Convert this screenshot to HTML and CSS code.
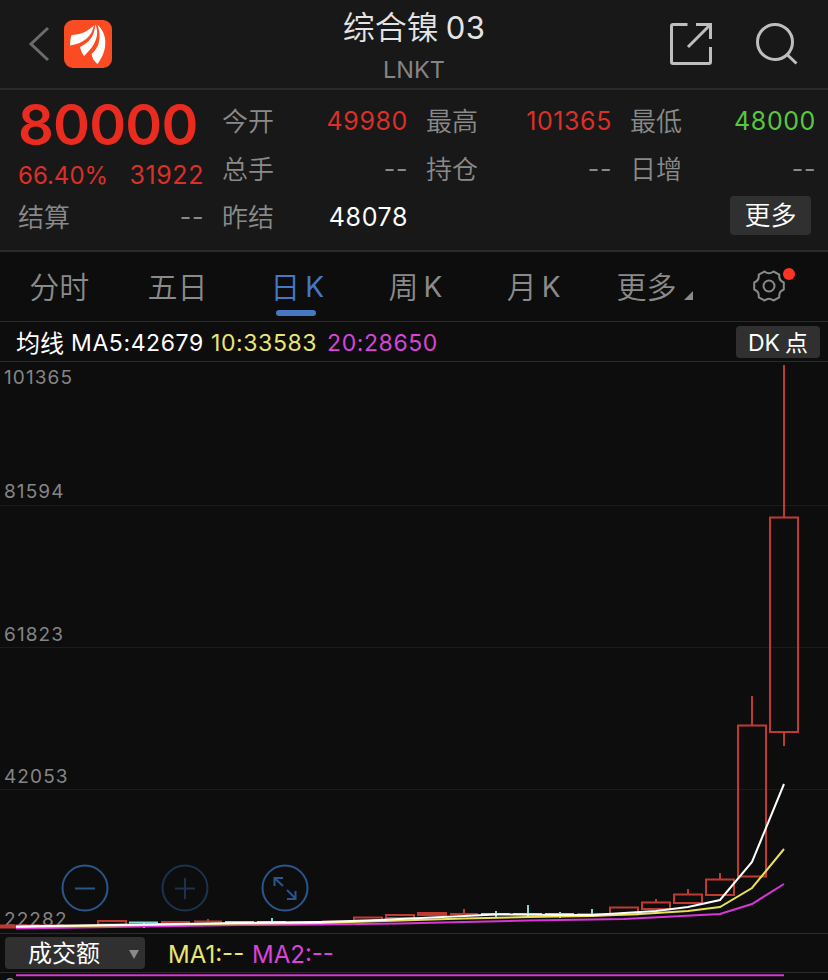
FILE: index.html
```html
<!DOCTYPE html>
<html lang="zh-CN">
<head>
    <meta charset="UTF-8">
    <meta name="viewport" content="width=device-width, initial-scale=1.0">
    <title>综合镍03</title>
    <link rel="stylesheet" href="styles.css">
</head>
<body>
    <header class="header">
        <div class="header-left">
            <svg class="back" width="22" height="38" viewBox="0 0 22 38"><path d="M20 3L3 19L20 35"/></svg>
            <svg class="logo" width="48" height="48" viewBox="0 0 48 48">
                <rect width="48" height="48" rx="9" fill="#fb4b22"/>
                <path d="M6 25.500C6.300 21 6.500 18 7.500 15C16 15 25 11 30 5C28 17 19 23.500 6 25.500Z"/>
                <path d="M16 27C25 23 31 15 31.200 4.500C37 16 29 28 20 36C18 33 16.500 30 16 27Z"/>
                <path d="M33.500 5C43 13 45 29 33.500 44C30 41 28 38 27.500 34C36 27 37.500 16 33.500 5Z"/>
            </svg>
        </div>
        <div class="title">
            <h1>综合镍<span class="title-num">03</span></h1>
            <p>LNKT</p>
        </div>
        <div class="header-right">
            <svg class="share" width="44" height="44" viewBox="0 0 44 44">
                <path d="M18.500 2.500H4Q2.500 2.500 2.500 4V40Q2.500 41.500 4 41.500H40Q41.500 41.500 41.500 40V25M27 2.500H41.500V17M41.500 2.500L19 25"/>
            </svg>
            <svg class="search" width="44" height="44" viewBox="0 0 44 44">
                <circle cx="20" cy="20" r="17.500"/><path d="M31.500 32L41.500 41.500"/>
            </svg>
        </div>
    </header>

    <section class="quote">
        <div class="col">
            <div class="price">80000</div>
            <div class="change"><span>66.40%</span><span class="amount">31922</span></div>
            <div class="row settle"><span class="label">结算</span><span class="num">--</span></div>
        </div>
        <div class="col">
            <div class="row"><span class="label">今开</span><span class="num red">49980</span></div>
            <div class="row"><span class="label">总手</span><span class="num">--</span></div>
            <div class="row"><span class="label">昨结</span><span class="num white">48078</span></div>
        </div>
        <div class="col">
            <div class="row"><span class="label">最高</span><span class="num red">101365</span></div>
            <div class="row"><span class="label">持仓</span><span class="num">--</span></div>
        </div>
        <div class="col">
            <div class="row"><span class="label">最低</span><span class="num green">48000</span></div>
            <div class="row"><span class="label">日增</span><span class="num">--</span></div>
            <div class="row row-more"><button class="more">更多</button></div>
        </div>
    </section>

    <nav class="tabs">
        <a class="tab">分时</a>
        <a class="tab">五日</a>
        <a class="tab active">日<span>K</span></a>
        <a class="tab">周<span>K</span></a>
        <a class="tab">月<span>K</span></a>
        <a class="tab tab-more">更多<svg class="corner" width="9" height="9" viewBox="0 0 9 9"><path d="M9 0V9H0Z"/></svg></a>
        <a class="tab tab-set">
            <svg class="gear" width="34" height="32" viewBox="0 0 34 32">
                <path d="M12.500 1.500Q17 5 21.500 1.500L27.300 4.700Q26.500 10.500 31.800 12.500V19.500Q26.500 21.500 27.300 27.300L21.500 30.500Q17 27 12.500 30.500L6.700 27.300Q7.500 21.500 2.200 19.500V12.500Q7.500 10.500 6.700 4.700Z"/>
                <circle cx="17" cy="16" r="5.500"/>
            </svg>
            <span class="dot"></span>
        </a>
    </nav>

    <div class="ma-bar">
        <span class="ma-name">均线</span>
        <span class="ma5">MA5:42679</span>
        <span class="ma10">10:33583</span>
        <span class="ma20">20:28650</span>
        <button class="dk">DK<span>点</span></button>
    </div>

    <main class="chart">
        <svg width="828" height="571" viewBox="0 362 828 571">
            <!-- grid -->
            <path class="grid" d="M0 505.500H828M0 647.500H828M0 789.500H828"/>

            <!-- zoom controls -->
            <g class="ctrl">
                <circle cx="85" cy="888" r="22.500"/>
                <path d="M75 888.500H95"/>
            </g>
            <g class="ctrl disabled">
                <circle cx="185" cy="888" r="22.500"/>
                <path d="M175 888.500H195M185 878V899"/>
            </g>
            <g class="ctrl">
                <circle cx="285" cy="888" r="22.500"/>
                <path d="M274.500 886V878H283M275 878.500L283 886M287 890L295 898M295.500 891V899H287"/>
            </g>

            <text class="axis" x="4" y="384">101365</text>
            <text class="axis" x="4" y="498">81594</text>
            <text class="axis" x="4" y="641">61823</text>
            <text class="axis" x="4" y="783">42053</text>
            <text class="axis" x="4" y="926">22282</text>

            <!-- candles, 32px apart -->
            <g class="up">
                <path d="M1 925.500H30V927.500H1ZM34 925.500H62M66 925.500H95"/>
                <rect x="98" y="921" width="28" height="3.500"/>
                <path d="M161 922H190M194 921.500H222M208 919V922M289 922.500H318M322 921.500H350"/>
                <rect x="354" y="917.500" width="28" height="3"/>
                <rect x="386" y="915" width="28" height="3"/>
                <rect x="418" y="913" width="28" height="2"/>
                <path d="M450 914H478M464 909V914"/>
                <rect x="610" y="907.500" width="28" height="7"/>
                <rect x="642" y="902.500" width="28" height="6.500"/>
                <path d="M656 899V902"/>
                <rect x="674" y="894.500" width="28" height="8.500"/>
                <path d="M688 889V894"/>
                <rect x="706" y="879.500" width="28" height="15.500"/>
                <path d="M720 873V879"/>
                <rect x="738" y="725.500" width="28" height="151"/>
                <path d="M752 696V725"/>
                <rect x="770" y="517.500" width="28" height="214.500"/>
                <path d="M784 365V517M784 732V746"/>
            </g>
            <g class="down">
                <path d="M129 922.500H158M144 922V928M225 922H254M257 922H286M272 918V923"/>
                <path d="M481 914H510M513 914H542M545 914H574M577 914.500H606M496 911V917M528 905V917M560 912V918M592 909V917"/>
            </g>

            <!-- moving averages -->
            <polyline class="line20" points="16,928.5 112,927 240,925 320,924.500 400,923.500 464,922 528,920.500 624,919 720,914 752,904 784,884"/>
            <polyline class="line10" points="16,927 112,925.500 240,923.500 320,923 400,920.500 464,918.500 528,917 592,916 640,914 688,911 720,907 752,888 784,849"/>
            <polyline class="line5" points="16,926.5 112,925 240,923 320,922 368,920.500 432,917.500 496,914.500 560,915 592,915 656,911 688,907 720,900 752,862 784,784"/>
        </svg>
    </main>

    <div class="volume-bar">
        <button class="select">成交额<svg width="10" height="9" viewBox="0 0 10 9"><path d="M0 0H10L5 9Z"/></svg></button>
        <span class="vol1">MA1:--</span>
        <span class="vol2">MA2:--</span>
    </div>
    <div class="volume">
        <svg width="828" height="7" viewBox="0 973 828 7">
            <text class="axis" x="4" y="992">0</text>
            <path class="line20" d="M16 975.300H784"/>
        </svg>
    </div>
</body>
</html>
```
FILE: styles.css
```css
* {
    margin: 0;
    padding: 0;
    box-sizing: border-box;
}

body {
    width: 828px;
    height: 980px;
    overflow: hidden;
    background-color: #0d0d0d;
    color: #8a8a8a;
    font-family: Inter, "Noto Sans CJK SC", sans-serif;
    font-weight: 350;
}

svg {
    display: block;
    fill: none;
}

button {
    border: none;
    border-radius: 4px;
    background-color: #303030;
    color: #fff;
    font-family: inherit;
    font-weight: inherit;
}

/* Header */
.header {
    display: flex;
    justify-content: space-between;
    height: 90px;
    background-color: #181818;
    border-bottom: 2px solid #2a2a2a;
}

.header-left,
.header-right {
    display: flex;
    align-items: center;
    width: 200px;
}

.header-left {
    gap: 14px;
    padding-left: 28px;
}

.header-right {
    justify-content: flex-end;
    gap: 42px;
    padding-right: 29px;
}

.back {
    stroke: #6b6b6b;
    stroke-width: 3;
}

.logo path {
    fill: #fff;
}

.share,
.search {
    stroke: #bebebe;
    stroke-width: 3;
}

.title {
    padding-top: 6px;
    text-align: center;
}

.title h1 {
    height: 42px;
    color: #e4e4e4;
    font-size: 32px;
    font-weight: 350;
    line-height: 43px;
}

.title-num {
    margin-left: 7px;
    font-size: 31px;
    font-weight: 400;
    letter-spacing: 0.5px;
}

.title p {
    color: #858585;
    font-size: 23.5px;
    font-weight: 400;
    line-height: 43px;
}

/* Quote */
.quote {
    display: grid;
    grid-template-columns: repeat(4, 185px);
    column-gap: 19px;
    height: 162px;
    padding: 7px 13px 0 18px;
    background-color: #181818;
    border-bottom: 2px solid #2a2a2a;
}

.row {
    display: flex;
    justify-content: space-between;
    align-items: center;
    height: 48px;
    font-size: 26px;
}

.label {
    padding-bottom: 3px;
}

.num {
    margin-right: -1px;
    font-size: 25px;
    font-weight: 400;
    letter-spacing: 0.6px;
}

.red {
    color: #dc2f27;
}

.green {
    color: #58c741;
}

.white {
    color: #fff;
}

.price {
    height: 56px;
    color: #e92b20;
    font-size: 56px;
    font-weight: 600;
    letter-spacing: -0.8px;
    line-height: 56px;
}

.change {
    display: flex;
    justify-content: space-between;
    height: 40px;
    color: #dc2f27;
    font-size: 24px;
    font-weight: 400;
    line-height: 45px;
}

.amount {
    margin-right: -1px;
    font-size: 25px;
    letter-spacing: 0.6px;
}

.row-more {
    justify-content: flex-end;
    padding-right: 4px;
}

.more {
    width: 81px;
    height: 39px;
    margin-top: -3px;
    font-size: 26px;
    line-height: 39px;
}

/* Tabs */
.tabs {
    display: flex;
    height: 70px;
    border-bottom: 1px solid #2b2b2b;
}

.tab {
    position: relative;
    display: flex;
    justify-content: center;
    align-items: center;
    width: 14.2857%;
    padding-bottom: 3px;
    font-size: 30px;
}

.tab span {
    margin: 3px 0 0 5px;
    font-size: 28px;
    font-weight: 400;
}

.tab:nth-child(n+3) {
    padding-left: 3px;
}

.tab-more:nth-child(n) {
    padding-left: 8px;
}

.tab-set:nth-child(n) {
    padding: 0 0 2px;
}

.active {
    color: #4678c4;
}

.active::after {
    content: "";
    position: absolute;
    bottom: 5px;
    left: 50%;
    width: 40px;
    height: 6px;
    margin-left: -20px;
    border-radius: 3px;
    background-color: #4678c4;
}

.corner {
    margin: 21px 0 0 7px;
    fill: #8a8a8a;
}

.gear {
    stroke: #8a8a8a;
    stroke-width: 2;
    stroke-linejoin: round;
}

.tab .dot {
    position: absolute;
    top: 16px;
    right: 33px;
    width: 12px;
    height: 12px;
    margin: 0;
    border-radius: 50%;
    background-color: #ff3425;
}

/* MA values */
.ma-bar {
    display: flex;
    align-items: center;
    height: 40px;
    padding: 0 8px 0 16px;
    border-bottom: 1px solid #2b2b2b;
    font-size: 23px;
    font-weight: 400;
    letter-spacing: 0.6px;
}

.ma-name {
    margin-right: 7px;
    color: #fff;
    font-size: 24px;
    letter-spacing: 0;
}

.ma5,
.ma10,
.ma20 {
    padding-top: 2px;
}

.ma5 {
    width: 140px;
    color: #fff;
}

.ma10 {
    width: 116px;
    color: #e9e671;
}

.ma20 {
    color: #d843d8;
}

.dk {
    width: 84px;
    height: 32px;
    margin-left: auto;
    font-size: 23px;
    line-height: 34px;
}

.dk span {
    margin-left: 5px;
}

/* Chart */
.chart {
    height: 571px;
}

.axis {
    fill: #858585;
    font-size: 19px;
    font-weight: 400;
    letter-spacing: 1.1px;
}

.grid {
    stroke: #1b1b1b;
}

.ctrl {
    stroke: #2b568c;
    stroke-width: 2;
}

.disabled {
    stroke: #1c3350;
}

.up {
    stroke: #c13a32;
    stroke-width: 2;
}

.down {
    stroke: #7edcd0;
    stroke-width: 2;
}

.line5,
.line10,
.line20 {
    stroke: #fff;
    stroke-width: 2;
}

.line10 {
    stroke: #e9e05a;
}

.line20 {
    stroke: #d936d6;
}

/* Volume */
.volume-bar {
    display: flex;
    align-items: center;
    height: 40px;
    padding-left: 5px;
    border-top: 1px solid #2b2b2b;
    border-bottom: 1px solid #2b2b2b;
    font-size: 24px;
    font-weight: 400;
}

.select {
    display: flex;
    justify-content: space-between;
    align-items: center;
    width: 140px;
    height: 32px;
    padding: 2px 6px 0 23px;
    font-size: 24px;
    line-height: 34px;
}

.select svg {
    fill: #8a8a8a;
}

.vol1,
.vol2 {
    padding-top: 3px;
}

.vol1 {
    width: 84px;
    margin-left: 23px;
    color: #e9e671;
}

.vol2 {
    color: #d843d8;
}
```
